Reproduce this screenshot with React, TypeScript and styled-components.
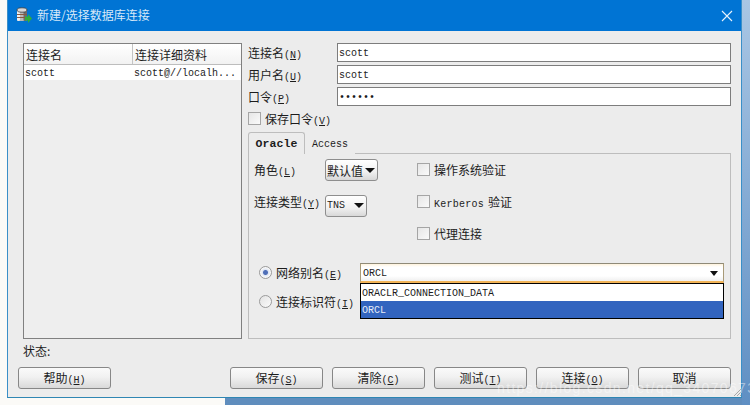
import React from "react";
import styled, { createGlobalStyle } from "styled-components";

const Global = createGlobalStyle`
  html, body { margin: 0; padding: 0; background: #f6f6f6; }
  * { box-sizing: border-box; }
`;

const cjk = `"Noto Sans CJK SC", "Liberation Sans", sans-serif`;
const mono = `"Liberation Mono", "Noto Sans CJK SC", monospace`;

const Page = styled.div`
  position: relative;
  width: 750px;
  height: 405px;
  overflow: hidden;
  padding-left: 7px;
  background: linear-gradient(to right, #fbfaf7 225px, #5f8dbd 225px);
  font-family: ${cjk};
  font-size: 12px;
  color: #1c1c1c;
`;

const RightStrip = styled.div`
  position: absolute;
  top: 0;
  right: 0;
  width: 8px;
  height: 405px;
  background: linear-gradient(to bottom, #a9c6e4, #5f8fc3);
`;

const Window = styled.div`
  position: relative;
  z-index: 1;
  width: 735px;
  height: 398px;
  display: flex;
  flex-direction: column;
  background: #ececec;
  border-left: 1px solid #3a8fc8;
  border-right: 1px solid #3a8fc8;
  border-bottom: 1px solid #2f86b3;
`;

const TitleBar = styled.div`
  height: 31px;
  flex: none;
  display: flex;
  align-items: center;
  padding: 0 8px;
  background: #0074d4;
  color: #d6e8f8;
`;

const TitleIcon = styled.svg`
  width: 16px;
  height: 17px;
  margin-right: 5px;
  flex: none;
`;

const TitleText = styled.span`
  font-size: 12px;
  line-height: 29px;
  height: 31px;
  flex: 1;
`;

const CloseIcon = styled.svg`
  width: 12px;
  height: 12px;
  flex: none;
`;

const Body = styled.div`
  flex: 1;
  display: flex;
  flex-direction: column;
  padding: 12px 10px 0 15px;
`;

const Main = styled.div`
  display: flex;
  gap: 6px;
  height: 296px;
`;

const ListBox = styled.div`
  width: 219px;
  flex: none;
  border: 1px solid #808080;
  background: #eeeeee;
`;

const ListHeader = styled.div`
  display: grid;
  grid-template-columns: 108px 1fr;
  height: 21px;
  background: linear-gradient(#ffffff, #f2f2f2);
  border-bottom: 1px solid #bdbdbd;
`;

const HeaderCell = styled.div`
  padding-left: 2px;
  line-height: 22px;
  height: 20px;
  font-size: 12px;
  & + & { border-left: 1px solid #c4c4c4; }
`;

const ListRow = styled.div`
  display: grid;
  grid-template-columns: 108px 1fr;
  height: 15px;
  background: #ffffff;
`;

const RowCell = styled.div`
  padding-left: 1px;
  font: 10px/17px ${mono};
  white-space: nowrap;
  overflow: hidden;
  & + & { padding-left: 2px; }
`;

const FormColumn = styled.div`
  width: 483px;
  flex: none;
  display: flex;
  flex-direction: column;
`;

const FieldGrid = styled.div`
  display: grid;
  grid-template-columns: 89px 394px;
  row-gap: 3px;
  grid-auto-rows: 19px;
`;

const Label = styled.label`
  font-size: 12px;
  line-height: 19px;
  white-space: nowrap;
`;

const Mnemonic = styled.span`
  font: 10px ${mono};
`;

const Underlined = styled.span`
  text-decoration: underline;
`;

const Input = styled.div`
  border: 1px solid #7d7d7d;
  background: #ffffff;
  padding-left: 1px;
  font: 10px/19px ${mono};
`;

const Check = styled.span`
  width: 13px;
  height: 13px;
  flex: none;
  border: 1px solid #a5a5a5;
  background: linear-gradient(135deg, #e6e6e6, #fafafa);
`;

const CheckRow = styled.div<{ $gap?: number }>`
  display: flex;
  align-items: center;
  gap: ${(p) => p.$gap ?? 4}px;
  height: 14px;
  white-space: nowrap;
`;

const SavePassword = styled(CheckRow)`
  margin-top: 5px;
  height: 15px;
`;

const Tabs = styled.div`
  display: flex;
  align-items: flex-end;
  margin-top: 6px;
  height: 22px;
  margin-bottom: -1px;
`;

const Tab = styled.div<{ $active?: boolean }>`
  width: ${(p) => (p.$active ? 57 : 50)}px;
  height: ${(p) => (p.$active ? 22 : 20)}px;
  text-align: center;
  font: ${(p) => (p.$active ? "bold 11.5px/22px" : "10px/22px")} ${mono};
  letter-spacing: ${(p) => (p.$active ? "0.1px" : "0")};
  position: relative;
  z-index: 1;
  border: ${(p) => (p.$active ? "1px solid #bdbdbd" : "0")};
  border-bottom: 0;
  border-radius: 3px 3px 0 0;
  background: #ececec;
`;

const TabPanel = styled.div`
  flex: 1;
  border: 1px solid #bdbdbd;
  padding: 5px 5px 0;
  display: flex;
  flex-direction: column;
`;

const Options = styled.div`
  display: grid;
  grid-template-columns: 163px 1fr;
  height: 104px;
`;

const SelectColumn = styled.div`
  display: flex;
  flex-direction: column;
  gap: 12px;
`;

const SelectRow = styled.div`
  display: grid;
  grid-template-columns: 71px auto;
  justify-content: start;
  align-items: center;
  height: 22px;
`;

const RoleLabel = styled.span`
  padding-bottom: 2px;
  white-space: nowrap;
`;

const TypeLabel = styled.span`
  padding-bottom: 8px;
  white-space: nowrap;
`;

const Select = styled.div<{ $width: number; $small?: boolean }>`
  width: ${(p) => p.$width}px;
  height: 22px;
  display: flex;
  align-items: center;
  justify-content: space-between;
  padding: 0 2px 0 1px;
  white-space: nowrap;
  border: 1px solid #8e8e8e;
  border-radius: 3px;
  background: linear-gradient(#ffffff, #f0f0f0 60%, #d8d8d8);
  font: ${(p) => (p.$small ? `10px ${mono}` : `12px ${cjk}`)};
`;

const Caret = styled.span`
  width: 0;
  height: 0;
  border-left: 5px solid transparent;
  border-right: 5px solid transparent;
  border-top: 5px solid #111;
`;

const CheckColumn = styled.div`
  display: flex;
  flex-direction: column;
  gap: 18px;
  padding-top: 3px;
`;

const MonoWord = styled.span`
  font: 10px ${mono};
  letter-spacing: 0.25px;
  margin-right: 4px;
`;

const NetGrid = styled.div`
  display: grid;
  grid-template-columns: 101px 364px;
  grid-template-rows: 20px 37px;
  padding-left: 5px;
`;

const RadioRow = styled.div`
  display: flex;
  align-items: center;
  gap: 4px;
  white-space: nowrap;
`;

const RadioFirst = styled(RadioRow)`
  padding-bottom: 2px;
`;

const RadioSecond = styled(RadioRow)`
  grid-column: 1;
`;

const Radio = styled.span<{ $on?: boolean }>`
  width: 13px;
  height: 13px;
  flex: none;
  border-radius: 50%;
  border: 1px solid #9a9a9a;
  background: ${(p) =>
    p.$on
      ? "radial-gradient(circle, #4f6fb8 0 2px, #dfe6f4 3px, #f8f8f8 5px)"
      : "linear-gradient(135deg, #e2e2e2, #fbfbfb)"};
`;

const ComboWrap = styled.div`
  position: relative;
`;

const Combo = styled.div`
  height: 20px;
  display: flex;
  align-items: center;
  justify-content: space-between;
  padding: 1px 5px 0 2px;
  border: 1px solid #a89a78;
  border-top-color: #8f8a78;
  border-bottom: 2px solid #f2b458;
  background: linear-gradient(#fff3dd, #ffffff 18%, #ffffff 70%, #f0f0f0);
  font: 10px ${mono};
`;

const ComboCaret = styled(Caret)`
  border-left-width: 4.5px;
  border-right-width: 4.5px;
  border-top-width: 5px;
`;

const Dropdown = styled.div`
  position: absolute;
  top: 20px;
  left: 0;
  right: 0;
  height: 36px;
  border: 1px solid #000;
  background: #ffffff;
  z-index: 2;
`;

const Option = styled.div<{ $selected?: boolean }>`
  height: 17px;
  padding-left: 1px;
  font: 10px/19px ${mono};
  color: ${(p) => (p.$selected ? "#e6ecf8" : "#1c1c1c")};
  background: ${(p) => (p.$selected ? "#3264bf" : "#ffffff")};
  overflow: hidden;
`;

const Status = styled.div`
  height: 28px;
  padding-top: 3px;
  font-size: 12px;
  line-height: 17px;
`;

const Footer = styled.div`
  display: flex;
  justify-content: space-between;
  margin-left: -5px;
`;

const ButtonGroup = styled.div`
  display: flex;
  gap: 9px;
`;

const Button = styled.button`
  width: 93px;
  height: 22px;
  padding: 0;
  border: 1px solid #878787;
  border-radius: 3px;
  background: linear-gradient(#fafafa, #f1f1f1 45%, #d9d9d9);
  color: #1c1c1c;
  font: 12px/16px ${cjk};
`;

const Watermark = styled.div`
  position: absolute;
  z-index: 3;
  left: 497px;
  top: 383px;
  font: 14px/10px "Liberation Sans", sans-serif;
  letter-spacing: 1.35px;
  color: rgba(255, 255, 255, 0.45);
  white-space: nowrap;
`;

const Grip = styled.svg`
  position: absolute;
  z-index: 2;
  left: 733px;
  top: 387px;
  width: 9px;
  height: 10px;
`;

const M = ({ k }: { k: string }) => (
  <Mnemonic>
    (<Underlined>{k}</Underlined>)
  </Mnemonic>
);

const Field = ({ label, k, value }: { label: string; k: string; value: string }) => (
  <>
    <Label>
      {label}
      <M k={k} />
    </Label>
    <Input>{value}</Input>
  </>
);

export default function App() {
  return (
    <Page>
      <Global />
      <RightStrip />
      <Window>
        <TitleBar>
          <TitleIcon viewBox="0 0 16 17">
            <rect x="1" y="2" width="10" height="12" rx="1.5" fill="#b9b9b9" />
            <rect x="1" y="2" width="3" height="12" rx="1.5" fill="#efefef" />
            <rect x="7.5" y="2" width="3.5" height="12" rx="1" fill="#6c6c6c" />
            <ellipse cx="6" cy="3" rx="5" ry="2.2" fill="#d8d8d8" stroke="#3b3b3b" strokeWidth="0.8" />
            <path d="M1 7.5h10M1 10.5h10" stroke="#8a5a40" strokeWidth="1.2" />
            <path d="M9 9.5h3v-2.5l4 4.5-4 4.5v-2.5H9z" fill="#2fae3c" />
          </TitleIcon>
          <TitleText>新建/选择数据库连接</TitleText>
          <CloseIcon viewBox="0 0 12 12">
            <path d="M1 1l10 10M11 1L1 11" stroke="#e8f3fc" strokeWidth="1.1" fill="none" />
          </CloseIcon>
        </TitleBar>
        <Body>
          <Main>
            <ListBox>
              <ListHeader>
                <HeaderCell>连接名</HeaderCell>
                <HeaderCell>连接详细资料</HeaderCell>
              </ListHeader>
              <ListRow>
                <RowCell>scott</RowCell>
                <RowCell>scott@//localh...</RowCell>
              </ListRow>
            </ListBox>
            <FormColumn>
              <FieldGrid>
                <Field label="连接名" k="N" value="scott" />
                <Field label="用户名" k="U" value="scott" />
                <Field label="口令" k="P" value="••••••" />
              </FieldGrid>
              <SavePassword $gap={4}>
                <Check />
                <span>
                  保存口令
                  <M k="V" />
                </span>
              </SavePassword>
              <Tabs>
                <Tab $active>Oracle</Tab>
                <Tab>Access</Tab>
              </Tabs>
              <TabPanel>
                <Options>
                  <SelectColumn>
                    <SelectRow>
                      <RoleLabel>
                        角色
                        <M k="L" />
                      </RoleLabel>
                      <Select $width={53}>
                        默认值
                        <Caret />
                      </Select>
                    </SelectRow>
                    <SelectRow>
                      <TypeLabel>
                        连接类型
                        <M k="Y" />
                      </TypeLabel>
                      <Select $width={42} $small>
                        TNS
                        <Caret />
                      </Select>
                    </SelectRow>
                  </SelectColumn>
                  <CheckColumn>
                    <CheckRow>
                      <Check />
                      操作系统验证
                    </CheckRow>
                    <CheckRow>
                      <Check />
                      <span>
                        <MonoWord>Kerberos</MonoWord>验证
                      </span>
                    </CheckRow>
                    <CheckRow>
                      <Check />
                      代理连接
                    </CheckRow>
                  </CheckColumn>
                </Options>
                <NetGrid>
                  <RadioFirst>
                    <Radio $on />
                    <span>
                      网络别名
                      <M k="E" />
                    </span>
                  </RadioFirst>
                  <ComboWrap>
                    <Combo>
                      ORCL
                      <ComboCaret />
                    </Combo>
                    <Dropdown>
                      <Option>ORACLR_CONNECTION_DATA</Option>
                      <Option $selected>ORCL</Option>
                    </Dropdown>
                  </ComboWrap>
                  <RadioSecond>
                    <Radio />
                    <span>
                      连接标识符
                      <M k="I" />
                    </span>
                  </RadioSecond>
                </NetGrid>
              </TabPanel>
            </FormColumn>
          </Main>
          <Status>状态:</Status>
          <Footer>
            <Button>
              帮助
              <M k="H" />
            </Button>
            <ButtonGroup>
              <Button>
                保存
                <M k="S" />
              </Button>
              <Button>
                清除
                <M k="C" />
              </Button>
              <Button>
                测试
                <M k="T" />
              </Button>
              <Button>
                连接
                <M k="O" />
              </Button>
              <Button>取消</Button>
            </ButtonGroup>
          </Footer>
        </Body>
      </Window>
      <Grip viewBox="0 0 9 10">
        <path d="M8 2L1 9M8 5L4 9M8 8L7 9" stroke="#a8a8a8" strokeWidth="1" />
      </Grip>
      <Watermark>https://blog.csdn.net/qq_34070673</Watermark>
    </Page>
  );
}
